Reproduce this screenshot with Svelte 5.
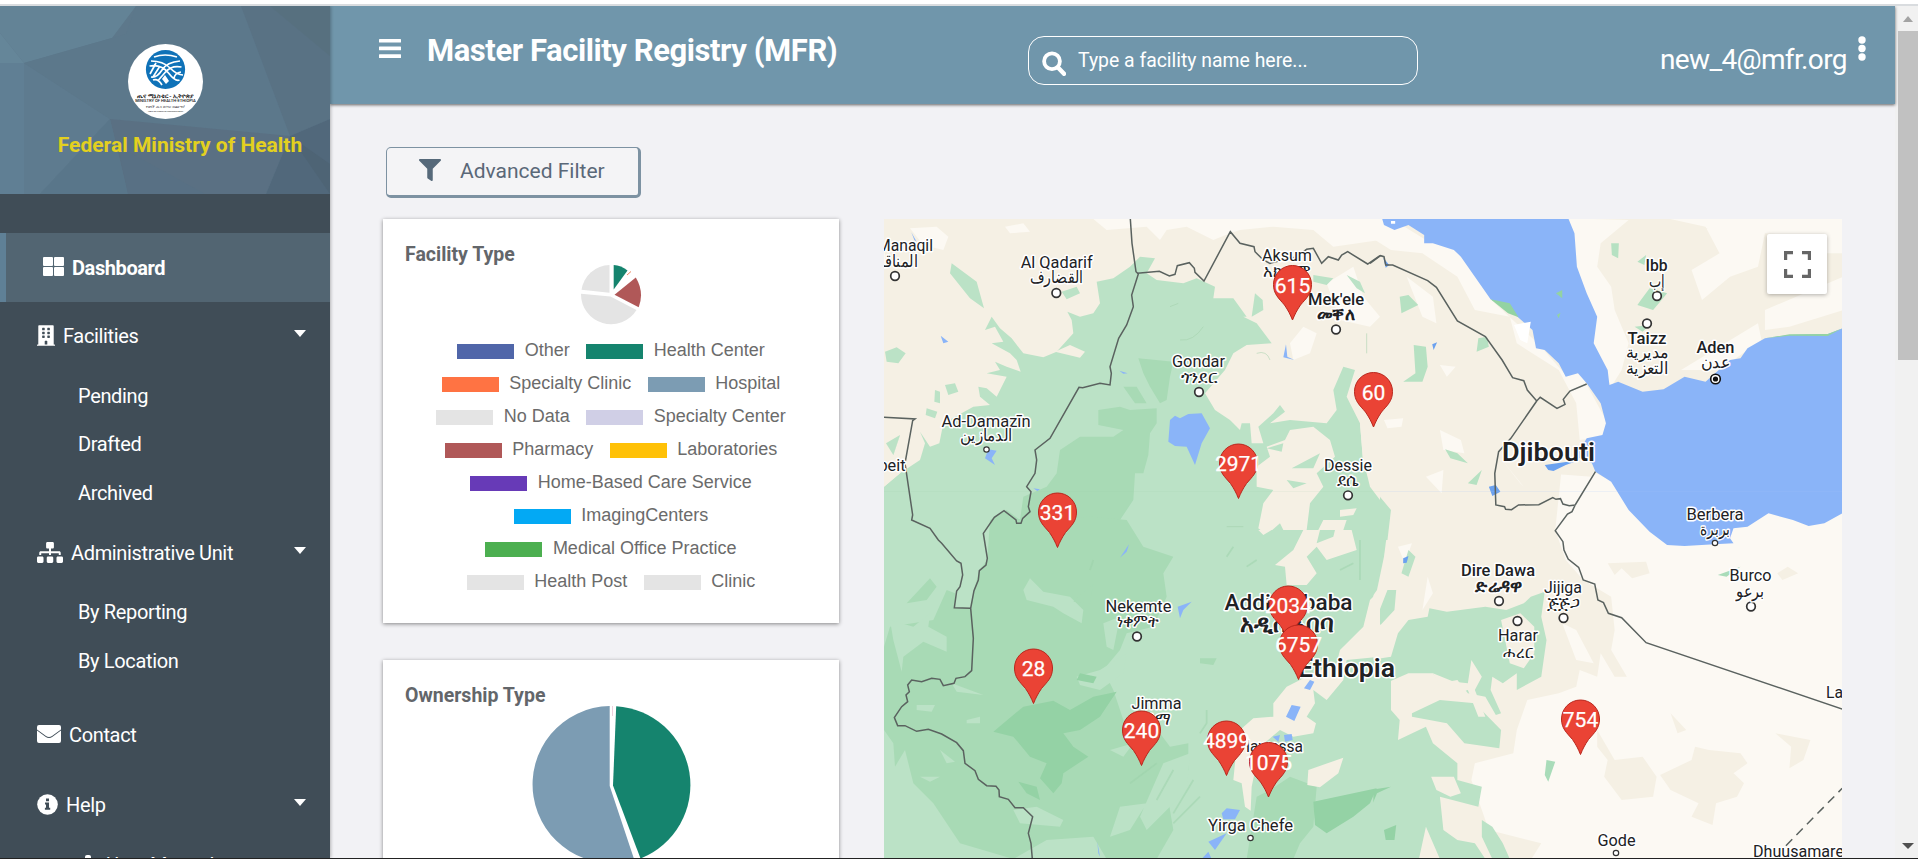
<script>
  const legend = [
    [{ c: '#5066a9', t: 'Other' }, { c: '#15846e', t: 'Health Center' }],
    [{ c: '#ff7343', t: 'Specialty Clinic' }, { c: '#7c9cb3', t: 'Hospital' }],
    [{ c: '#e4e4e4', t: 'No Data' }, { c: '#d0cfe6', t: 'Specialty Center' }],
    [{ c: '#b05858', t: 'Pharmacy' }, { c: '#ffc107', t: 'Laboratories' }],
    [{ c: '#673ab7', t: 'Home-Based Care Service' }],
    [{ c: '#03a9f4', t: 'ImagingCenters' }],
    [{ c: '#4caf50', t: 'Medical Office Practice' }],
    [{ c: '#e4e4e4', t: 'Health Post' }, { c: '#e4e4e4', t: 'Clinic' }]
  ];

  // text, centre x, baseline y, width, size, weight
  const labels = [
    ['Manaqil', 905, 251, 56, 16, 400], ['المناقل', 896, 267, 44, 17, 400],
    ['Al Qadarif', 1056.7, 268, 72, 16, 400], ['القضارف', 1056.5, 283, 54, 17, 400],
    ['Aksum', 1287, 261, 50, 16, 400], ['አክሱም', 1287, 277, 48, 17, 400],
    ["Mek'ele", 1336, 305, 56, 16, 500], ['መቐለ', 1336, 320, 38, 17, 700],
    ['Gondar', 1198.5, 367, 53, 16, 400], ['ጎንደር', 1199, 383, 36, 17, 400],
    ['Ad-Damazīn', 986, 427, 89, 16, 400], ['الدمازين', 986, 441, 53, 17, 400],
    ['beit', 892, 471, 27, 16, 400],
    ['Dessie', 1348, 471, 48, 16, 400], ['ደሴ', 1348, 486, 22, 17, 400],
    ['Ibb', 1656.6, 271, 22, 16, 500], ['إب', 1657, 287, 16, 17, 400],
    ['Taizz', 1647, 344, 39, 16, 500], ['مديرية', 1647, 358, 43, 17, 400], ['التعزية', 1647, 374, 43, 17, 400],
    ['Aden', 1715.5, 353, 38, 16, 500], ['عدن', 1715.5, 368, 29, 17, 400],
    ['Djibouti', 1548.5, 461, 93, 26, 600],
    ['Berbera', 1715, 520, 57, 16, 400], ['بربرة', 1715, 535, 30, 17, 400],
    ['Nekemte', 1138.5, 612, 66, 16, 400], ['ነቀምት', 1137.5, 627, 42, 17, 400],
    ['Addis Ababa', 1288.5, 610, 128, 22, 500], ['አዲስ አበባ', 1287, 632, 95, 24, 600],
    ['Ethiopia', 1346.5, 677, 97, 26, 600],
    ['Jimma', 1156.5, 709, 50, 16, 400], ['ጅማ', 1156, 725, 28, 17, 400],
    ['Hawassa', 1271, 752, 64, 16, 400],
    ['Yirga Chefe', 1250.5, 831, 85, 16, 400],
    ['Dire Dawa', 1498, 576, 74, 16, 500], ['ድሬዳዋ', 1499, 592, 48, 17, 700],
    ['Jijiga', 1563, 593, 38, 16, 400], ['ጅጅጋ', 1563, 609, 33, 17, 400],
    ['Harar', 1518, 641, 40, 16, 400], ['ሐረር', 1518, 658, 30, 17, 400],
    ['Burco', 1750.5, 581, 42, 16, 400], ['برعو', 1750, 597, 28, 17, 400],
    ['La', 1834.5, 698, 17, 16, 400],
    ['Gode', 1616.5, 846, 38, 16, 400],
    ['Dhuusamareb', 1803, 857, 100, 16, 400]
  ];

  const towns = [
    [895, 276, 4.3], [1056.3, 293, 4.3], [1336, 329.5, 4.3], [1199, 392, 4.3], [986.5, 449.5, 2.7],
    [1348, 495.3, 4.3], [1657, 296, 4.3], [1647, 323.5, 4.3], [1715, 543, 2.7], [1137, 636.5, 4.3],
    [1250.5, 838, 2.7], [1499, 601, 4.3], [1563.5, 618, 4.3], [1517.5, 621, 4.3], [1751, 606.5, 4.3], [1616, 853, 2.7]
  ];

  // count, tip x, tip y
  const pins = [
    ['615', 1292.5, 320], ['60', 1373.5, 427], ['2971', 1238.5, 498.5], ['331', 1057.5, 547.5],
    ['28', 1033.5, 703.5], ['240', 1141.5, 765.5], ['4899', 1226.5, 775.5], ['1075', 1268.5, 797],
    ['2034', 1288.3, 640.5], ['6757', 1298.5, 679.5], ['754', 1580.5, 754.5]
  ];
</script>

<div class="page">
  <div class="chrome"></div>
  <div class="body">
    <aside>
      <div class="brand">
        <svg class="poly" viewBox="0 0 330 188" preserveAspectRatio="none">
          <rect width="330" height="188" fill="#5d788b" />
          <path d="M0 0H136L112 32 24 57 0 27Z" fill="#638396" />
          <path d="M0 27L24 57H0Z" fill="#658699" />
          <path d="M0 57H24V188H0Z" fill="#607f94" />
          <path d="M24 57L110 113 40 188H24Z" fill="#5e7b8f" />
          <path d="M136 0H241L290 130 110 113 24 57 126 28Z" fill="#5c788b" />
          <path d="M241 0H330V113L290 130Z" fill="#597284" />
          <path d="M270 0H330V50Z" fill="#57707f" />
          <path d="M110 113L290 130 266 188H128Z" fill="#5a7083" />
          <path d="M110 113L128 188H40Z" fill="#59768a" />
          <path d="M330 113V188H266L290 130Z" fill="#51687b" />
          <path d="M290 130L330 158V188Z" fill="#4e6475" />
          <path d="M128 188L118 140 205 188Z" fill="#587084" />
        </svg>
        <div class="seal">
          <svg viewBox="0 0 75 75" width="75" height="75">
            <circle cx="37.5" cy="37.5" r="37.5" fill="#fff" />
            <circle cx="37.5" cy="25.500" r="19.600" fill="#0f72b8" />
            <g fill="none" stroke="#fff" stroke-width="1.700">
              <path d="M26 13q11-4 23 0M23 17q12 0 19 7t13 7M21.500 22q12-2 19 7t11 7M52 17q-13 1-18 9t-11 7M53.500 23q-10-2-16 5t-8 9M28 19l-6 11M32 22l-7 11M53 28q-6 1-7 6M25 36q5-2 9 5" />
            </g>
            <path d="M37 31l4 6-3 3-4-5z" fill="#fff" />
          </svg>
          <span class="s1">ጤና ሚኒስቴር - ኢትዮጵያ</span>
          <span class="s2">MINISTRY OF HEALTH-ETHIOPIA</span>
          <span class="s3">የዜጎች ጤና ለሃገር ብልጽግና!</span>
          <span class="s4">HEALTHIER CITIZENS FOR PROSPEROUS NATION</span>
        </div>
        <div class="ministry">Federal Ministry of Health</div>
      </div>
      <nav>
        <div class="row active">
          <svg width="21" height="19" viewBox="0 0 21 19" fill="#fff"><rect width="10" height="9" rx="1" /><rect x="11" width="10" height="9" rx="1" /><rect y="10" width="10" height="9" rx="1" /><rect x="11" y="10" width="10" height="9" rx="1" /></svg>
          <b>Dashboard</b>
        </div>
        <div class="row fac">
          <svg width="18" height="21" viewBox="0 0 448 512" fill="#fff"><path d="M436 480h-20V24c0-13.300-10.700-24-24-24H56C42.700 0 32 10.700 32 24v456H12c-6.600 0-12 5.400-12 12v20h448v-20c0-6.600-5.400-12-12-12zM128 76c0-6.600 5.400-12 12-12h40c6.600 0 12 5.400 12 12v40c0 6.600-5.400 12-12 12h-40c-6.600 0-12-5.400-12-12V76zm0 96c0-6.600 5.400-12 12-12h40c6.600 0 12 5.400 12 12v40c0 6.600-5.400 12-12 12h-40c-6.600 0-12-5.400-12-12v-40zm52 148h-40c-6.600 0-12-5.400-12-12v-40c0-6.600 5.400-12 12-12h40c6.600 0 12 5.400 12 12v40c0 6.600-5.400 12-12 12zm76 160h-64v-84c0-6.600 5.400-12 12-12h40c6.600 0 12 5.400 12 12v84zm64-172c0 6.600-5.400 12-12 12h-40c-6.600 0-12-5.400-12-12v-40c0-6.600 5.400-12 12-12h40c6.600 0 12 5.400 12 12v40zm0-96c0 6.600-5.400 12-12 12h-40c-6.600 0-12-5.400-12-12v-40c0-6.600 5.400-12 12-12h40c6.600 0 12 5.400 12 12v40zm0-96c0 6.600-5.400 12-12 12h-40c-6.600 0-12-5.400-12-12V76c0-6.600 5.400-12 12-12h40c6.600 0 12 5.400 12 12v40z" /></svg>
          <span>Facilities</span><i class="caret"></i>
        </div>
        <div class="sub first"><a>Pending</a><a>Drafted</a><a>Archived</a></div>
        <div class="row adm">
          <svg width="26" height="21" viewBox="0 0 640 512" fill="#fff"><path d="M128 352H32c-17.670 0-32 14.330-32 32v96c0 17.670 14.330 32 32 32h96c17.670 0 32-14.330 32-32v-96c0-17.670-14.330-32-32-32zm-24-80h192v48h48v-48h192v48h48v-57.590c0-21.170-17.230-38.410-38.410-38.410H344v-64h40c17.670 0 32-14.330 32-32V32c0-17.670-14.330-32-32-32H256c-17.670 0-32 14.330-32 32v96c0 17.670 14.330 32 32 32h40v64H94.410C73.230 224 56 241.230 56 262.410V320h48v-48zm264 80h-96c-17.670 0-32 14.330-32 32v96c0 17.670 14.330 32 32 32h96c17.670 0 32-14.330 32-32v-96c0-17.670-14.330-32-32-32zm240 0h-96c-17.670 0-32 14.330-32 32v96c0 17.670 14.330 32 32 32h96c17.670 0 32-14.330 32-32v-96c0-17.670-14.330-32-32-32z" /></svg>
          <span>Administrative Unit</span><i class="caret"></i>
        </div>
        <div class="sub second"><a>By Reporting</a><a>By Location</a></div>
        <div class="row con">
          <svg width="24" height="18" viewBox="0 0 24 18" fill="#fff"><path d="M2 0H22Q24 0 24 2V4.500L15 11Q12 13.200 9 11L0 4.500V2Q0 0 2 0ZM0 5.600L8.500 11.800Q12 14.300 15.500 11.800L24 5.600V16Q24 18 22 18H2Q0 18 0 16Z" /></svg>
          <span>Contact</span>
        </div>
        <div class="row hel">
          <svg width="21" height="21" viewBox="0 0 21 21"><circle cx="10.500" cy="10.500" r="10.300" fill="#fff" /><path d="M9 4.600h3v2.700H9zM8 8.600h4v5.200h1.200v1.900H7.900v-1.900H9v-3.300H8z" fill="#404d57" /></svg>
          <span>Help</span><i class="caret"></i>
        </div>
        <div class="sub last"><a><svg width="6" height="20" viewBox="0 0 6 20" fill="#fff"><rect width="6" height="20" rx="2" /></svg>User Manual</a></div>
      </nav>
    </aside>

    <main>
      <header>
        <svg class="burger" width="22" height="19" viewBox="0 0 22 19" fill="#fff"><rect width="22" height="3.600" rx=".5" /><rect y="7.600" width="22" height="3.600" rx=".5" /><rect y="15.300" width="22" height="3.600" rx=".5" /></svg>
        <h1>Master Facility Registry (MFR)</h1>
        <div class="search">
          <svg width="24" height="25" viewBox="0 0 24 25" fill="none" stroke="#fff"><circle cx="10" cy="10.300" r="7.900" stroke-width="3.800" /><path d="M16 16.500L22 22.800" stroke-width="4.400" stroke-linecap="round" /></svg>
          <span>Type a facility name here...</span>
        </div>
        <div class="mail">new_4@mfr.org</div>
        <svg class="dots" width="8" height="26" viewBox="0 0 8 26" fill="#fff"><circle cx="4" cy="4" r="3.700" /><circle cx="4" cy="12.500" r="3.700" /><circle cx="4" cy="21" r="3.700" /></svg>
      </header>

      <section class="content">
        <button class="filter">
          <svg width="22" height="22" viewBox="0 0 512 512" fill="#56697a"><path d="M487.976 0H24.028C2.710 0-8.047 25.866 7.058 40.971L192 225.941V432c0 7.831 3.821 15.170 10.237 19.662l80 55.980C298.020 518.690 320 507.493 320 487.980V225.941l184.947-184.970C520.021 25.896 509.338 0 487.976 0z" /></svg>
          <span>Advanced Filter</span>
        </button>
        <div class="columns">
          <div class="cards">
            <div class="card one">
              <h2>Facility Type</h2>
              <svg class="pie" width="64" height="62" viewBox="579 264 64 62">
                <path d="M613.700 289.500V265Q621 265.200 627.500 270.500Z" fill="#15846e" />
                <path d="M627 275L631 271.500" stroke="#e9784e" stroke-width=".9" />
                <path d="M614.500 294.800L635.800 277.500Q644.500 292 638.700 307.200Z" fill="#b05858" />
                <path d="M610.500 296.500L636.500 310A30 30 0 0 1 581 293.800Z" fill="#e4e4e4" />
                <path d="M609.500 292.800L581.500 289.700A29 29 0 0 1 609.500 265Z" fill="#e4e4e4" />
              </svg>
              <div class="legend">
                {#each legend as row}
                  <div class="lrow">
                    {#each row as item}
                      <span class="litem"><i style:background={item.c}></i>{item.t}</span>
                    {/each}
                  </div>
                {/each}
              </div>
            </div>
            <div class="card two">
              <h2>Ownership Type</h2>
              <svg class="pie" width="164" height="164" viewBox="530 704 164 164">
                <path d="M609.700 706V786L634.200 859.500A78.500 78.500 0 1 1 609.700 706Z" fill="#7c9cb3" />
                <path d="M616.200 706.200A79 79 0 0 1 640.500 858.500L613 785.500Z" fill="#15846e" />
                <path d="M612.500 706V716" stroke="#e9c4d4" stroke-width=".8" />
              </svg>
            </div>
          </div>

          <div class="map">
            <svg width="958" height="639" viewBox="884 219 958 639">
              <rect x="884" y="219" width="958" height="639" fill="#f5f0e4" />
              <!-- south-east -->
              <g transform="translate(1370 530) scale(.34952 .33333)">
                <path d="M500-170L1400-100V1000H0V900Z" fill="#fcf9f3" />
                <path d="M0-300H560L530 0 560 90 610 150 690 200 700 300 690 360 735 440 700 440 660 370 650 440 600 420 590 470 540 490 450 510 420 600 410 670 300 700 290 750 340 900 490 940 460 990H0Z" fill="#f5f0e4" />
                <path d="M550 280L590 390 640 400 590 300ZM80 50L120 40 100 100ZM165 140L180 190 150 240Z" fill="#fcf9f3" />
                <path d="M680 100L790 95 800 130 750 145 720 115 700 135ZM430 10L490 30 480 55 440 50ZM860 550L905 600 880 610ZM1160 610L1260 630 1240 690 1200 715 1205 650ZM1165 130L1195 110 1225 130 1180 150ZM650 600L700 690 780 680 820 740 810 800 720 810 670 740 680 690 650 650Z" fill="#f5f0e4" />
                <path d="M830 735L920 690 930 650 970 660 1060 670 1080 700 1040 730 1070 760 1050 800 990 820 980 885 920 860 940 820 860 780Z" fill="#f5f0e4" />
                <path d="M0-80L50 0 40 80 20 180 0 210Z" fill="#bbe2c6" />
                <path d="M110 60L130 80 110 140 90 130ZM50 180L75 180 70 240 30 285 20 260Z" fill="#bbe2c6" />
                <path d="M80 310L110 270 165 260 170 235 220 245 330 230 390 240 440 220 460 200 500 185 490 260 505 330 490 440 420 480 420 430 380 460 350 440 345 480 375 550 360 555 330 500 280 490 250 450 200 460 180 430 110 430 0 480V390L60 380Z" fill="#bbe2c6" />
                <path d="M0 440L60 420 60 540 85 570 80 630 160 590 180 640 250 700 250 750 320 770 310 830 200 800 210 900 250 930 300 940 330 987H200L160 890 140 987H0Z" fill="#bbe2c6" />
                <path d="M120 550L200 510 300 520 375 600 370 655 270 640 220 580 120 560ZM320 870L350 890 380 940 400 987H350L320 920Z" fill="#bbe2c6" />
                <path d="M290 390L320 440 300 480 330 560 310 560 280 480 220 500 140 520 130 500 200 470 180 430 240 455 280 460ZM375 270L400 400 440 415 470 370 470 290 430 250ZM175 740L240 740 260 790 230 800 190 780Z" fill="#f5f0e4" />
                <path d="M505 690L530 695 510 755 500 735ZM995 135L1060 110 1020 140Z" fill="#a9dcb9" />
                <path d="M0 780L60 770 20 790 0 840ZM40 900L75 885 70 930 45 930Z" fill="#94d2a5" />
                <path d="M95 85L110 78 105 98 95 100Z" fill="#6ba1ef" />
              </g>
              <!-- north-east -->
              <g transform="translate(1370 210) scale(.34952 .33333)">
                <path d="M0 25H60L160 90 260 110 345 268 480 400 560 495 600 485 680 640 665 680 600 690 590 580 540 480 420 400 400 320 300 300 250 200 150 130 60 120 0 80Z" fill="#fcf9f3" />
                <path d="M550 25H1355V400L1080 450 900 530 690 530 640 400 640 340 580 170Z" fill="#f5f0e4" />
                <path d="M570 25L740 30 660 100 650 170 690 230 700 300 740 400 720 480 690 530 635 400 640 320 590 200ZM1130 300L1355 200V300L1200 350 1130 360ZM850 25H1355V130H1290V80L1130 70 1110 170 1030 200 950 270 920 180 1000 130 960 50ZM890 480L1110 340 1120 390 1000 480Z" fill="#fcf9f3" />
                <path d="M930 60L965 55 950 110Z" fill="#f5f0e4" />
                <path d="M640 785L700 820 830 990 580 990 530 960 580 900ZM200 660L260 690 270 730 210 720ZM160 800L210 780 205 850ZM200 465L245 470 220 500ZM40 630L95 625 90 650 50 655ZM105 200L180 260 190 340 150 320ZM370 740L440 830 430 820Z" fill="#fcf9f3" />
                <path d="M85 260L110 255 138 285 90 310ZM125 405L160 410 165 470 150 515 95 515 130 490ZM310 385L335 380 340 410 305 425ZM215 718L250 730 280 760 230 745ZM280 820L320 780 305 825ZM690 100L712 100 710 145 692 135ZM765 155L790 135 785 165ZM775 270L800 235 850 250 830 275 810 300 765 285ZM757 350L800 345 780 365Z" fill="#b6e1c2" />
                <path d="M35 27H568L585 70 592 170 620 250 650 320 640 400 680 480 685 525 710 515 780 545 840 538 900 500 960 515 1030 450 1060 445 1080 415 1130 385 1200 375 1310 372 1351 355V910L1300 940 1255 948 1210 930 1140 910 1080 950 1040 955 1030 985 1040 1000 985 1003 900 1008 850 1005 800 965 740 900 690 815 645 785 635 760 590 740 620 685 665 675 675 640 660 580 620 520 595 490 560 500 540 460 500 420 475 415 465 360 400 300 345 268 300 200 260 140 240 120 180 100 155 100 155 75 110 45 70 60 40 45Z" fill="#8ab4f8" />
                <path d="M500 765L600 750 560 765 525 783 510 780ZM340 830L360 825 373 845 350 858ZM178 403L192 397 182 420ZM38 143L55 165 45 173Z" fill="#6ba1ef" />
                <path d="M345 268L400 280 425 322 395 310Z M532 250L550 240V265ZM535 315L545 308 540 325ZM1130 385L1200 373 1310 372 1351 355 1310 378 1200 377Z" fill="#93d3a2" />
                <path d="M412 345L460 335 450 400 430 390ZM60 33h12v8H60z" fill="#fff" />
                <path d="M0 740L20 850 60 900 50 990H0Z" fill="#bbe2c6" />
                <path d="M0 844.500H1355" stroke="#a5c3f5" stroke-width="1" opacity=".5" />
              </g>
              <!-- north-west -->
              <g transform="translate(880 210) scale(.33333)">
                <path d="M375 50L430 40 450 65 390 70ZM640 27H1500V90L1360 110 1300 60 1180 50 1080 60 1050 70 1000 90 920 50 860 60 840 90 800 50 680 60ZM90 55L170 50 205 80 190 120 130 105ZM1230 400L1270 350 1310 370 1290 430 1240 450ZM1340 220L1420 170 1450 260 1500 320 1470 350 1380 330Z" fill="#fcf9f3" />
                <path d="M12 990V830L60 790 120 750 135 700 120 665 150 710 178 700 190 640 280 590 330 585 300 560 295 530 320 535 350 560 380 500 320 490 360 480 345 455 380 470 422 485 410 450 390 430 335 400 370 395 345 350 315 360 335 320 360 355 395 385 430 430 490 442 530 425 580 370 575 330 562 305 600 320 640 310 660 280 650 215 700 205 750 170 780 140 825 145 800 190 830 210 910 220 950 205 1005 230 1000 265 1060 265 1100 320 1090 320 1130 340 1175 400 1100 405 1060 430 1035 480 975 550 1005 600 1050 630 1080 660 1085 640 1110 640 1115 700 1150 700 1135 650 1180 610 1200 585 1215 605 1170 640 1230 630 1340 640 1370 600 1360 540 1390 470 1425 480 1400 560 1420 600 1440 640 1450 760 1475 830 1500 870V990Z" fill="#bbe2c6" />
                <path d="M1160 710L1215 690 1230 660 1300 650 1350 690 1365 740 1310 790 1330 830 1290 880 1280 960 1220 980 1200 940 1160 975 1135 955 1150 880 1180 840 1130 830 1130 770 1170 740ZM1440 640L1500 620V870L1470 830 1448 740ZM1380 900L1430 895 1420 915 1380 920ZM525 425L570 405 615 425 600 443ZM1330 930L1400 930 1380 990 1310 970Z" fill="#f5f0e4" />
                <path d="M215 160L290 215 312 295 270 265 210 190ZM15 425L50 412 77 430 55 460 20 455ZM545 245L590 230 600 250 560 268ZM195 525L225 520 235 545 205 555ZM165 540L180 545 180 580 163 575ZM140 595L172 605 165 625 137 615ZM60 675L40 735 18 700ZM1125 250L1148 270 1150 300 1115 320ZM1300 195L1360 205 1340 225 1300 215ZM1235 775L1320 730 1300 775ZM1220 810L1280 820 1240 835ZM1400 195L1440 215 1455 250 1430 235ZM1160 715L1210 700 1205 725Z" fill="#bbe2c6" />
                <path d="M12 690L40 670 60 675 40 735 75 760 60 790 12 830Z" fill="#f5f0e4" />
                <path d="M60 675L40 735 18 700Z" fill="#bbe2c6" />
                <path d="M775 445L880 455 870 500 860 570 840 580 810 530 790 490ZM730 530L770 530 800 580 765 580ZM655 600L720 590 750 600 830 595 830 640 810 670 805 735 790 790 765 790 760 870 700 960 620 960 580 930 560 990H330V930L380 900 420 930 430 860 500 830 530 790 540 720 600 680 700 680 730 660 655 645Z" fill="#a8dab5" />
                <path d="M870 630L885 617 900 625 925 612 965 610 990 655 965 700 945 765 920 710 885 708 865 695ZM325 718L350 722 335 745 345 765 315 745ZM182 377L205 395 190 400ZM1218 403L1222 440 1243 450 1210 442ZM718 482L743 490 730 491ZM460 835L480 838 472 843ZM94 67L110 95 103 90Z" fill="#8ab4f8" />
                <path d="M900 390q40 5 70-40M870 290l25-10M1130 430q30-10 40 20M1460 370v60M1040 950h50" fill="none" stroke="#a0cfa9" stroke-width="3" opacity=".5" />
                <path d="M12 845H1500" stroke="#9ccaa9" opacity=".4" />
              </g>
              <!-- south-west -->
              <g transform="translate(880 530) scale(.33333)">
                <path d="M12 0H1480V987H12Z" fill="#bbe2c6" />
                <path d="M330-30L640-40 740-30 790 50 880 80 850 130 860 200 820 290 740 310 720 360 670 420 700 480 740 600 840 610 870 650 925 640 925 720 860 780 880 900 830 987H680L640 920 500 930 400 987 240 940 160 820 100 760 75 660 45 710 40 640 12 600V350L30 290 160 270 200 180 225 190V235H272L282 180 298 120 322 90Z" fill="#a8dab5" />
                <path d="M430 180L450 145 490 185 570 200 610 240 605 280 550 250 520 230 440 210ZM30 270L100 290 150 250 145 290 200 320 200 365 130 335 70 380 65 425 40 330ZM590 440L660 420 740 370 730 430 660 480 600 465ZM400 840L470 830 550 870 540 890 420 880ZM110 525L165 525 155 545 110 540ZM260 570L300 560 300 580 260 580ZM120 740L180 740 150 755ZM670 280L720 260 700 360 680 350ZM215 460L310 495 230 485ZM690 660L760 640 730 680ZM180 660L225 695 200 700ZM850 700L930 670 920 780 800 900 780 860ZM480 650L570 660 500 665ZM720 830L800 820 750 900 690 920Z" fill="#bbe2c6" />
                <path d="M80 220L150 145 170 170 140 210ZM960 385L1010 385 1000 405 960 400ZM1100 987L1130 800 1170 780 1230 740 1310 770 1300 890 1260 940 1240 987ZM580 215L640 160 630 220Z" fill="#a8dab5" />
                <path d="M340 605L430 530 520 512 570 540 640 500 710 485 660 560 600 600 550 610 580 650 625 680 550 730 545 760 520 790 480 745 500 700 450 680 400 620ZM1300 815L1490 775 1470 820 1420 860 1340 910 1305 885ZM415 755L470 770 480 810 440 790ZM600 430L650 440 640 460 590 450Z" fill="#94d2a5" />
                <path d="M1135 0H1175L1150 15ZM1270 0H1320L1310 40 1360 20 1365 0H1415L1430 60 1340 90 1310 50 1280 80 1310 130 1280 165 1220 165 1215 110 1185 105 1240 60ZM1500 180L1470 210 1450 290 1380 360 1370 400 1300 430 1220 470 1180 520 1180 560 1120 565 1080 600 1070 650 1060 750 1085 760 1095 830 1112 842 1115 770 1140 650 1200 600 1240 620 1300 610 1308 580 1280 560 1305 520 1300 480 1340 510 1390 450 1400 390 1500 380ZM1285 720L1390 683 1375 730 1320 772 1282 765Z" fill="#f5f0e4" />
                <path d="M893 230L935 215 910 240 900 265ZM720 83L747 43 740 65ZM1290 450L1303 455 1290 480 1272 475ZM1235 525L1262 530 1243 573 1218 560ZM1178 620L1200 615 1195 635ZM1212 615L1235 612 1238 630 1215 635ZM1025 850L1040 835 1080 840 1065 868 1030 868ZM985 935L1040 910 1005 960ZM965 987L985 965 995 987ZM652 935L660 980 655 970Z" fill="#8ab4f8" />
                <path d="M940 750l-60 100M880 720l-50 90M960 800l-80 80M980 540v40l-20 30M830 700l-80 60M640 90l-10 30M1060 50l-20 30M1100 110l30-20M1380 120l40-20M1440 30v120" fill="none" stroke="#9bd1aa" stroke-width="5" opacity=".5" />
              </g>
              <!-- borders -->
              <g fill="none" stroke="#5a625f" stroke-width="1.500" class="border">
                <g transform="translate(880 210) scale(.33333)">
                  <path d="M751 27L756 100 768 185 775 192 755 255 760 290 740 345 716 385 690 470 694 490 690 525 660 520 608 533 597 532 510 685 465 720 470 750 465 790 440 830 453 845 445 890 450 905 428 925 423 940 410 940 408 930 372 902 343 922 310 970 322 1045 318 1065 298 1082 295 1110 282 1142 272 1195 280 1285 275 1382 255 1400 228 1405 222 1420 190 1427 180 1408 155 1405 125 1415 95 1410 83 1425 88 1445 78 1455 83 1475 65 1490 43 1523 53 1547 75 1547 110 1564 145 1558 185 1572 230 1598 250 1622 255 1660 285 1682 295 1708 320 1727 348 1729 357 1740 358 1760 385 1768 405 1793 430 1793 458 1820 445 1870 453 1900 457 1947" />
                  <path d="M772 190L838 184 868 198 885 193 892 167 928 158 943 175 945 187 972 213 1051 65 1080 100 1122 110 1125 125 1150 150 1170 160 1250 140 1280 118 1300 115 1325 160 1345 140 1375 150 1385 135 1403 125 1463 162 1500 137" />
                  <path d="M12 622L105 627 98 632 75 760 98 915 95 930 150 955 175 990 185 1000 230 1053 243 1060 248 1095 240 1130 230 1143 223 1193 272 1195" />
                </g>
                <g transform="translate(1370 210) scale(.34952 .33333)">
                  <path d="M0 160L30 137 40 140 45 165 65 165 165 212 190 232 250 333 330 380 378 450 408 503 440 512 450 540 477 573 487 562 535 595 558 583 553 568 572 543 620 522" />
                  <path d="M477 573L403 685 368 725 357 790 360 885 385 890 388 898 405 899 425 885 483 884 523 863 532 868 545 866 552 882 570 887 587 885 645 785M587 885L578 905 565 912 530 962 552 995 555 1020 567 1047 597 1072 610 1110 643 1122 652 1170 668 1178 682 1210 720 1223 790 1298 1351 1497" />
                  <path d="M1190 1907L1351 1735" stroke-dasharray="9 6" />
                </g>
              </g>
              <g class="places">
                {#each towns as [x, y, r]}
                  <circle cx={x} cy={y} {r} fill="#fff" stroke="#333" stroke-width={r > 3 ? 1.7 : 1.2} />
                {/each}
                <circle cx="1715.500" cy="379" r="4.800" fill="#fff" stroke="#111" stroke-width="1.600" /><circle cx="1715.500" cy="379" r="2.600" fill="#111" />
                {#each labels as [t, x, y, w, size, weight]}
                  <text {x} {y} text-anchor="middle" textLength={w} lengthAdjust="spacingAndGlyphs" font-size={size} font-weight={weight}>{t}</text>
                {/each}
              </g>
              <g class="pins">
                {#each pins as [n, x, y]}
                  <g transform={`translate(${x} ${y})`}>
                    <path d="M0 0C-2.500-6-4-9-8-15-14-22-19-26-19-35.500A19 19 0 0 1 19-35.500C19-26 14-22 8-15 4-9 2.500-6 0 0Z" fill="#ea4335" stroke="#b9271d" stroke-width="1" />
                    <text y="-27.500" text-anchor="middle">{n}</text>
                  </g>
                {/each}
              </g>
            </svg>
            <div class="full">
              <svg width="27" height="27" viewBox="0 0 27 27" fill="none" stroke="#666" stroke-width="3.200"><path d="M1.600 9V1.600H9M18 1.600H25.400V9M25.400 18V25.400H18M9 25.400H1.600V18" /></svg>
            </div>
          </div>
        </div>
      </section>
    </main>

    <div class="scroll">
      <i class="up"></i>
      <div class="thumb"></div>
      <i class="down"></i>
    </div>
  </div>
  <div class="foot"></div>
</div>

<style>
  :global(body) { margin: 0; overflow: hidden; }
  * { box-sizing: border-box; }
  .page { width: 1918px; height: 859px; display: flex; flex-direction: column; overflow: hidden; background: #f2f2f5; font-family: Roboto, 'Noto Sans', sans-serif; }
  .chrome { height: 6px; flex: none; background: #fff; border-bottom: 2px solid #d9dcdf; }
  .foot { height: 1px; flex: none; background: #222; }
  .body { height: 852px; display: flex; overflow: hidden; }

  aside { width: 330px; flex: none; background: #404d57; color: #fff; z-index: 2; box-shadow: 1px 0 3px rgba(0, 0, 0, .25); }
  .brand { position: relative; height: 188px; display: flex; flex-direction: column; align-items: center; padding-top: 38px; overflow: hidden; }
  .poly { position: absolute; inset: 0; width: 330px; height: 188px; }
  .seal { position: relative; width: 75px; height: 75px; margin-left: 1px; color: #111; }
  .seal span { position: absolute; left: -20px; right: -20px; text-align: center; white-space: nowrap; line-height: 1; }
  .s1 { top: 48.500px; font-size: 6px; font-weight: 600; }
  .s2 { top: 55px; font-size: 4.100px; font-weight: 500; }
  .s3 { top: 62px; font-size: 3.600px; }
  .s4 { top: 66.500px; font-size: 1.600px; }
  .ministry { position: relative; margin-top: 14px; margin-left: 30px; font-weight: 700; font-size: 21px; line-height: 25px; color: #e3d01f; white-space: nowrap; }

  nav { padding-top: 39px; font-size: 20px; letter-spacing: -.35px; }
  .row { display: flex; align-items: center; padding-left: 37px; height: 68px; position: relative; }
  .row span, .row b { margin-left: 8px; line-height: 24px; white-space: nowrap; }
  .row svg { flex: none; position: relative; top: -1px; }
  .row.active { height: 69px; background: #526572; border-left: 6px solid #5f8096; }
  .row.active b { letter-spacing: -.4px; }
  .row.adm { height: 70px; }
  .row.con, .row.hel { height: 70px; }
  .caret { margin-left: auto; margin-right: 24px; margin-top: -5px; border: 6px solid transparent; border-top: 7px solid #fff; border-bottom: 0; }
  .sub { display: flex; flex-direction: column; padding-left: 78px; }
  .sub a { height: 48.500px; display: flex; align-items: center; }
  .sub.first { padding-top: 1.500px; padding-bottom: 1px; }
  .sub.second { padding-bottom: 15px; }
  .sub.last a { height: 49px; padding-left: 7px; gap: 15px; }

  main { width: 1565px; flex: none; display: flex; flex-direction: column; }
  header { position: relative; height: 98px; flex: none; display: flex; align-items: flex-start; background: #7096ab; color: #fff; box-shadow: 0 1px 3px rgba(0, 0, 0, .6); }
  .burger { margin: 33px 0 0 49px; }
  h1 { margin: 25px 0 0 26px; width: 601px; font-size: 31px; line-height: 40px; font-weight: 700; letter-spacing: -.43px; white-space: nowrap; }
  .search { margin-top: 30px; width: 390px; height: 49px; border: 1.500px solid #fff; border-radius: 16px; display: flex; align-items: center; padding-left: 13px; font-size: 19.400px; white-space: nowrap; }
  .search svg { margin-top: 6px; }
  .search span { margin-left: 12px; margin-top: -1px; }
  .mail { margin: 37px 0 0 242px; width: 188px; font-size: 28px; letter-spacing: -.65px; line-height: 34px; white-space: nowrap; }
  .dots { margin: 30px 0 0 10px; }

  .content { padding: 43px 53px 0 53px; display: flex; flex-direction: column; align-items: flex-start; }
  .filter { margin: 0 0 0 3px; width: 255px; height: 51px; background: #f4f4f6; border: solid #7d92a2; border-width: 1px 3px 3px 1px; border-radius: 5px; display: flex; align-items: center; padding: 0 0 2px 32px; font: 400 21px Roboto, sans-serif; color: #5a6878; }
  .filter svg { margin-top: -2px; }
  .filter span { margin-left: 19px; white-space: nowrap; }
  .columns { margin-top: 21px; display: flex; gap: 45px; }
  .cards { display: flex; flex-direction: column; gap: 37px; }
  .card { width: 456px; background: #fff; box-shadow: 0 1px 4px rgba(0, 0, 0, .45); display: flex; flex-direction: column; align-items: center; }
  .card.one { height: 404px; }
  .card.two { height: 400px; }
  h2 { align-self: flex-start; margin: 24px 0 0 22px; font-size: 19.500px; line-height: 24px; font-weight: 700; color: #63666a; }
  .one .pie { margin-top: -3px; }
  .two .pie { margin-top: -4px; margin-left: 1px; }
  .legend { margin-top: 8px; display: flex; flex-direction: column; font: 18px 'Liberation Sans', Arial, sans-serif; color: #6b6b6b; }
  .lrow { display: flex; justify-content: center; gap: 16.500px; height: 33px; align-items: center; }
  .litem { display: flex; align-items: center; gap: 10.500px; white-space: nowrap; }
  .litem i { width: 57px; height: 15px; margin-top: 2px; }

  .map { position: relative; width: 958px; height: 639px; }
  .map > svg { display: block; }
  .border path { vector-effect: non-scaling-stroke; }
  .places text { fill: #202124; stroke: #fff; stroke-width: 3px; paint-order: stroke; stroke-linejoin: round; }
  .pins text { fill: #fff; font-size: 21px; font-weight: 400; stroke: #fff; stroke-width: .25px; }
  .full { position: absolute; right: 15px; top: 15px; width: 60px; height: 60px; background: #fff; border-radius: 2px; box-shadow: 0 1px 4px rgba(0, 0, 0, .3); display: flex; align-items: center; justify-content: center; }

  .scroll { width: 23px; flex: none; background: #f1f1f1; padding-left: 3px; display: flex; flex-direction: column; align-items: center; }
  .up { margin-top: 10px; border: 5px solid transparent; border-bottom: 6px solid #a3a3a3; border-top: 0; }
  .thumb { margin-top: 9px; width: 20px; height: 329px; background: #c1c1c1; }
  .down { margin-top: auto; margin-bottom: 9px; border: 6px solid transparent; border-top: 6px solid #505050; border-bottom: 0; }
</style>
